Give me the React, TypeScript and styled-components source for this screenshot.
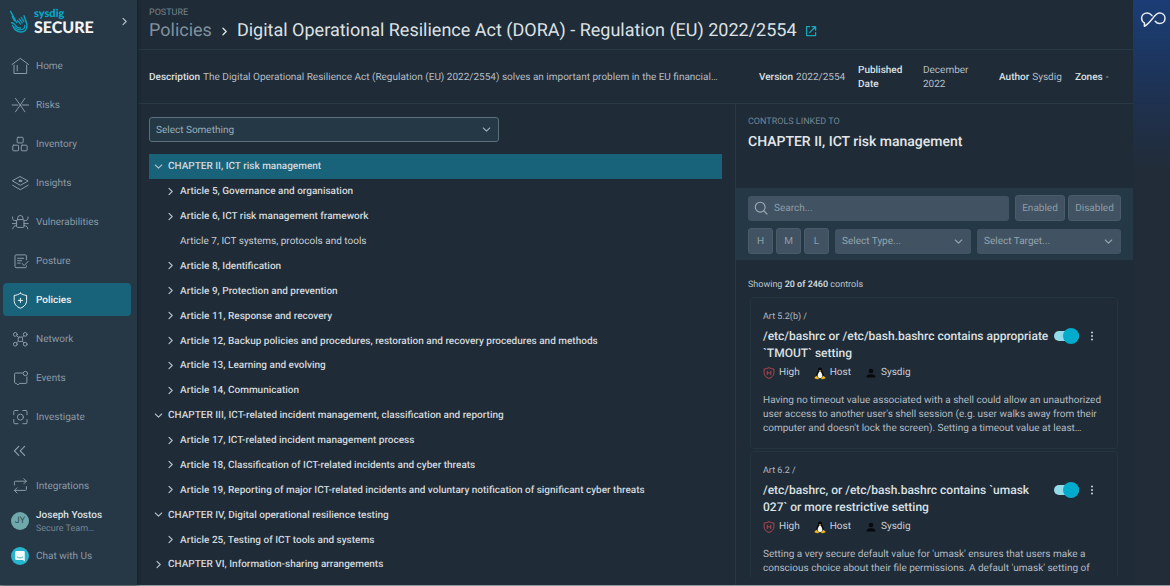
import React from "react";
import styled, { createGlobalStyle, css } from "styled-components";

const c = {
  bg: "#1f2b37",
  side: "#263746",
  accent: "#18637a",
  bar: "#253845",
  field: "#415362",
  line: "#283844",
  cardLine: "#24353f",
  text: "#c9d0d5",
  strong: "#dce1e4",
  muted: "#8b9ba6",
  dim: "#748591",
  teal: "#00abcb",
};

const Global = createGlobalStyle`
  * { box-sizing: border-box; }
  body { margin: 0; background: ${c.bg}; color: ${c.text}; font: 400 10px/14px Roboto, sans-serif; text-rendering: geometricPrecision; }
  button, input, select { font: inherit; color: inherit; margin: 0; text-rendering: inherit; }
  button { padding: 0; border: 0; background: none; cursor: pointer; text-align: left; }
  ul, h1, h2, h3, p, dl, dd { margin: 0; padding: 0; list-style: none; }
  a { color: inherit; text-decoration: none; }
  svg { display: block; flex: none; }
`;

/* ---------- page frame ---------- */

const Page = styled.div`
  display: grid;
  grid-template-columns: 137px minmax(0, 1fr) 37px;
  height: 100vh;
  border-bottom: 1px solid #8d999f;
`;

const Sidebar = styled.aside`
  display: flex;
  flex-direction: column;
  background: ${c.side};
  box-shadow: 1px 0 3px #17212b;
  z-index: 1;
`;

const Main = styled.main`
  display: flex;
  flex-direction: column;
  min-width: 0;
  min-height: 0;
`;

const Rail = styled.aside`
  background: linear-gradient(#1b3d75 0, #1b3a6b 30px, #1e3150 100px, #222c38 170px);
`;

const RailButton = styled.button`
  display: flex;
  justify-content: center;
  width: 100%;
  padding: 11px 0 0 3px;
`;

/* Row captions sit slightly below the centre line of their icon. */
const Label = styled.span`
  padding-top: 2px;
`;

/* ---------- sidebar ---------- */

const Brand = styled.a`
  display: flex;
  align-items: flex-start;
  height: 49px;
  padding: 8px 8px 0 9px;
`;

const BrandName = styled.span`
  flex: 1;
  padding-left: 5px;
  font-family: Lato, sans-serif;
  font-weight: 900;
`;

const BrandTop = styled.span`
  display: block;
  color: #08a9c8;
  font-size: 11px;
  line-height: 11px;
`;

const BrandBottom = styled.span`
  display: block;
  color: #f3f5f6;
  font-size: 16px;
  line-height: 18px;
`;

const BrandArrow = styled.span`
  padding-top: 9px;
  color: #b5c0c7;
`;

const NavList = styled.ul`
  display: flex;
  flex-direction: column;
  gap: 6px;
  padding: 0 6px 0 3px;
`;

const NavItem = styled.a<{ $active?: boolean }>`
  display: flex;
  align-items: center;
  gap: 7px;
  height: 33px;
  padding-left: 8px;
  border-radius: 4px;
  color: ${(p) => (p.$active ? "#f0f4f5" : c.muted)};
  font-weight: ${(p) => (p.$active ? 500 : 400)};
  background: ${(p) => (p.$active ? c.accent : "transparent")};
`;

const FootList = styled.div`
  display: flex;
  flex-direction: column;
  padding: 0 6px 0 3px;
`;

const footRow = css`
  display: flex;
  align-items: center;
  gap: 7px;
  height: 35px;
  padding-left: 8px;
  color: ${c.muted};
`;

const FootLink = styled.a`${footRow}`;
const FootButton = styled.button`${footRow}`;

const Avatar = styled.span<{ $fill: string }>`
  display: grid;
  place-items: center;
  width: 18px;
  height: 18px;
  border-radius: 50%;
  background: ${(p) => p.$fill};
  color: #2c4a54;
  font-size: 9px;
`;

const UserName = styled.span`
  display: block;
  color: ${c.strong};
  font-weight: 500;
`;

const UserTeam = styled.span`
  display: block;
  color: ${c.dim};
  font-size: 9px;
  line-height: 12px;
`;

/* ---------- header ---------- */

const Header = styled.header`
  height: 50px;
  padding: 7px 12px 0;
  border-bottom: 1px solid ${c.line};
`;

const Overline = styled.p`
  color: ${c.dim};
  font-size: 9px;
  line-height: 12px;
`;

const Crumbs = styled.div`
  display: flex;
  align-items: center;
  gap: 8px;
  color: ${c.strong};
  font-size: 18px;
  line-height: 24px;
`;

const CrumbLink = styled.a`
  color: #7f919d;
`;

const Title = styled.h1`
  font-size: 18px;
  font-weight: 400;
  line-height: 24px;
`;

const Meta = styled.dl`
  display: flex;
  align-items: center;
  height: 54px;
  padding: 2px 23px 0 12px;
  border-bottom: 1px solid ${c.line};
`;

const MetaItem = styled.div<{ $w?: number }>`
  display: flex;
  align-items: center;
  gap: 3px;
  flex: ${(p) => (p.$w ? `0 0 ${p.$w}px` : "1 1 0")};
  min-width: 0;
  white-space: nowrap;
`;

const Term = styled.dt<{ $w?: number }>`
  color: ${c.strong};
  font-weight: 500;
  width: ${(p) => (p.$w ? `${p.$w}px` : "auto")};
  white-space: ${(p) => (p.$w ? "normal" : "nowrap")};
`;

const Value = styled.dd<{ $w?: number }>`
  color: #b5bec5;
  width: ${(p) => (p.$w ? `${p.$w}px` : "auto")};
  white-space: ${(p) => (p.$w ? "normal" : "nowrap")};
`;

/* ---------- requirement tree ---------- */

const Columns = styled.div`
  display: flex;
  flex: 1;
  min-height: 0;
`;

const TreePanel = styled.section`
  display: flex;
  flex: 1;
  flex-direction: column;
  min-width: 0;
  padding: 13px 13px 8px 12px;
`;

const Picker = styled.span<{ $w?: number; $outlined?: boolean }>`
  display: grid;
  align-items: center;
  flex: ${(p) => (p.$w ? "0 0 auto" : "1 1 0")};
  width: ${(p) => (p.$w ? `${p.$w}px` : "auto")};
  color: ${(p) => (p.$outlined ? "#9badb8" : "#95a4ae")};

  & > * { grid-area: 1 / 1; }
  & > svg { justify-self: end; margin-right: 8px; pointer-events: none; }
  & > select {
    appearance: none;
    width: 100%;
    height: 25px;
    padding: 2px 24px 0 ${(p) => (p.$outlined ? 6 : 7)}px;
    border: ${(p) => (p.$outlined ? "1px solid #5c6f7c" : "0")};
    border-radius: 3px;
    background: ${(p) => (p.$outlined ? c.bar : c.field)};
  }
`;

const Tree = styled.ul`
  display: flex;
  flex: 1;
  flex-direction: column;
  min-height: 0;
  padding-top: 12px;
`;

const TreeItem = styled.li`
  display: flex;
  flex: 1 1 0;
  min-height: 24px;
  max-height: 25px;
`;

const TreeRow = styled.button<{ $level: number; $selected?: boolean; $plain?: boolean }>`
  display: flex;
  align-items: center;
  flex: 1;
  gap: 4px;
  padding-left: ${(p) => (p.$level === 2 ? 16 : 4)}px;
  background: ${(p) => (p.$selected ? c.accent : "transparent")};
  color: ${(p) => (p.$plain ? c.text : "#d3d9dd")};
  font-weight: ${(p) => (p.$plain ? 400 : 500)};
  white-space: nowrap;
`;

const ChevronSlot = styled.span`
  display: grid;
  place-items: center;
  width: 11px;
  color: #b3bdc5;
`;

/* ---------- controls ---------- */

const ControlsPanel = styled.section`
  display: flex;
  flex-direction: column;
  flex: 0 0 398px;
  min-height: 0;
  padding-bottom: 8px;
  border-left: 1px solid ${c.line};
`;

const ControlsHead = styled.div`
  height: 84px;
  padding: 12px 12px 0;
`;

const ControlsTitle = styled.h2`
  padding-top: 5px;
  color: #e3e7e9;
  font-size: 14px;
  font-weight: 500;
  line-height: 18px;
`;

const Filters = styled.div`
  display: flex;
  flex-direction: column;
  gap: 7px;
  padding: 7px 12px 6px;
  background: ${c.bar};
`;

const FilterRow = styled.div`
  display: flex;
  align-items: center;
  gap: 6px;
`;

const ButtonGroup = styled.div`
  display: flex;
  gap: 3px;
`;

const FilterButton = styled.button<{ $w: number }>`
  width: ${(p) => p.$w}px;
  height: 26px;
  padding-top: 2px;
  border: 1px solid #4a5b69;
  border-radius: 3px;
  background: ${c.field};
  color: #8d9da8;
  text-align: center;
`;

const Search = styled.label`
  display: flex;
  align-items: center;
  flex: 1;
  gap: 6px;
  height: 25px;
  padding: 0 6px;
  border-radius: 3px;
  background: ${c.field};
  color: #a0adb6;
`;

const SearchInput = styled.input`
  flex: 1;
  min-width: 0;
  padding: 2px 0 0;
  border: 0;
  outline: 0;
  background: none;
  &::placeholder { color: #8d9da8; opacity: 1; }
`;

const Count = styled.p`
  padding: 18px 12px 5px;
  color: #bcc5cb;
  font-size: 9px;
  & > strong { color: ${c.strong}; font-weight: 500; }
`;

const CardList = styled.ul`
  display: flex;
  flex-direction: column;
  flex: 1;
  gap: 2px;
  min-height: 0;
  overflow: hidden;
  padding: 0 15px 0 14px;
`;

const Card = styled.li`
  flex: none;
  padding: 12px 12px 12px;
  border: 1px solid ${c.cardLine};
  border-radius: 4px;
`;

const CardRef = styled.p`
  color: #b0bac1;
  font-size: 9px;
`;

const CardTop = styled.div`
  display: flex;
  align-items: flex-start;
  padding-top: 4px;
`;

const CardTitle = styled.h3`
  flex: 1;
  color: ${c.strong};
  font-size: 12px;
  font-weight: 500;
  line-height: 17px;
`;

const Toggle = styled.input`
  appearance: none;
  display: grid;
  align-items: center;
  flex: none;
  width: 25px;
  height: 16px;
  margin: 0 9px 0 0;
  cursor: pointer;

  &::before,
  &::after {
    content: "";
    grid-area: 1 / 1;
  }

  &::before {
    height: 10px;
    border-radius: 5px;
    background: #93dbe8;
  }

  &::after {
    justify-self: end;
    width: 16px;
    height: 16px;
    border-radius: 50%;
    background: ${c.teal};
  }
`;

const Kebab = styled.button`
  display: grid;
  place-items: center;
  width: 8px;
  height: 16px;
  margin-right: 9px;
  color: #cfd6da;
`;

const Tags = styled.ul`
  display: flex;
  gap: 14px;
  padding-top: 4px;
`;

const Tag = styled.li`
  display: flex;
  align-items: center;
  gap: 4px;
  height: 14px;
  color: ${c.text};
`;

const CardText = styled.p`
  padding-top: 14px;
  color: #b3bcc3;
`;

/* ---------- icons ---------- */

const Svg = ({ size = 18, children, w = 1 }: { size?: number; children: React.ReactNode; w?: number }) => (
  <svg width={size} height={size} viewBox={`0 0 ${size} ${size}`} fill="none" stroke="currentColor" strokeWidth={w} strokeLinecap="round" strokeLinejoin="round" aria-hidden="true">
    {children}
  </svg>
);

const ChevronDown = () => <Svg size={9} w={1.1}><path d="M1.3 3 4.5 6.2 7.7 3" /></Svg>;
const ChevronRight = ({ w = 1.2 }: { w?: number }) => <Svg size={9} w={w}><path d="M3 1.3 6.2 4.5 3 7.7" /></Svg>;

const icons: Record<string, React.ReactNode> = {
  home: <><path d="M1 7.5 9.3 1.4l8.3 6.1" /><path d="M3 8v8.5h12.7V8M6.2 8.5V14" /></>,
  risks: <path d="M1.2 9h5.6M11 9h6.6M4.5 2.4 9.2 9l4.7-6.6M4.5 15.8 9.2 9l4.7 6.8" />,
  inventory: <><rect x="6.2" y="2.3" width="6" height="5.6" rx=".8" /><rect x="1.8" y="10.2" width="5.8" height="5.6" rx=".8" /><rect x="10.3" y="10.2" width="5.8" height="5.6" rx=".8" /></>,
  insights: <><path d="M9.3 2.7 17.2 7l-7.9 4.3L1.6 7z" /><path d="M1.6 11.2l7.7 4.5 7.9-4.5" /><ellipse cx="9.3" cy="6.9" rx="1.6" ry=".8" fill="currentColor" /></>,
  vulnerabilities: <><rect x="5.6" y="6.6" width="7.4" height="7.8" rx="1" /><path d="M6.6 6.4V5.2a2.7 2.7 0 0 1 5.4 0v1.2M1.6 4v1.6c0 1.2 1 1.8 4 2.2M17 4v1.6c0 1.2-1 1.8-4 2.2M1.4 10.6h4.2M13 10.6h4.2M5.6 12.6c-2.6.3-3.6 1-3.8 3.2M13 12.6c2.6.3 3.6 1 3.8 3.2" /></>,
  posture: <><path d="M15.4 7.8V3.9a1 1 0 0 0-1-1H5a1 1 0 0 0-1 1v10.8a1 1 0 0 0 1 1h9.4a1 1 0 0 0 1-1v-.9" /><path d="M6.6 6.3h6M6.6 8.7h4M6.6 11.1h2.6M11 11.4l2.2 2.1 4-4.2" /></>,
  policies: <><path d="M9.4 2.2c1.8 1.3 3.8 2 6.2 2.2v5c0 3.8-2.4 6.4-6.2 7.8-3.8-1.4-6.2-4-6.2-7.8v-5c2.4-.2 4.4-.9 6.2-2.2z" /><path d="M9.4 7.3v4.2M7.3 9.4h4.2" /></>,
  network: <><rect x="7.2" y="7.1" width="4.4" height="4.4" rx="1" /><circle cx="4.3" cy="4.4" r="1.9" /><circle cx="14.2" cy="4.4" r="1.9" /><circle cx="4.3" cy="14.2" r="1.9" /><circle cx="14.2" cy="14.2" r="1.9" /><path d="m5.7 5.8 1.7 1.6M12.8 5.8l-1.5 1.6M5.7 12.8l1.7-1.6M12.8 12.8l-1.5-1.6" /></>,
  events: <><path d="M11.3 4H4.6a1 1 0 0 0-1 1v8.4a1 1 0 0 0 1 1h.8l1.5 1.6 1.5-1.6h6.5a1 1 0 0 0 1-1V8" /><circle cx="14.4" cy="4.5" r="2.2" /></>,
  investigate: <><circle cx="9.4" cy="9.1" r="3" /><path d="M2.8 6.7V3.5a1 1 0 0 1 1-1H7M11.8 2.5H15a1 1 0 0 1 1 1v3.2M16 11.5v3.2a1 1 0 0 1-1 1h-3.2M7 15.7H3.8a1 1 0 0 1-1-1v-3.2" /></>,
  collapse: <path d="m7.8 4.4-4.4 4.5 4.4 4.5M13.6 4.4 9.2 8.9l4.4 4.5" strokeWidth="1.3" />,
  integrations: <><path d="M3.4 8V5.2a1 1 0 0 1 1-1h10.8M12.8 1.6l2.6 2.6-2.6 2.6" /><path d="M15.4 9.6v2.8a1 1 0 0 1-1 1H3.6M6 10.8l-2.6 2.6L6 16" /></>,
};

const Logo = () => (
  <svg width="20" height="26" viewBox="0 0 20 26" fill="none" stroke="#0ba5c4" strokeWidth="1.4" strokeLinecap="round" strokeLinejoin="round" aria-hidden="true">
    <path d="M1.6 3.4 5 9.8c.8 1.6 1.2 3 2.8 4.8" />
    <path d="M3.4 8.6 5.4 12.8M2.6 14.8c1.6-.2 2.6.6 3.6 2.2 1.2 2 3 3.2 5.2 3" />
    <path d="M3.6 17.4c1.6 4 4.4 6.6 8.4 6.6 3.8 0 6-2.8 6-6.2 0-3.6-1.8-5.8-3-10" />
    <path d="M5.6 19c1.6 2 3.6 3 6 2.8 2.6-.2 4.2-2 4.2-4.4M8.4 12.4l3.2 3.8M10.2 10.8l3.2 4M12.2 9.4l2.8 4.2" strokeWidth="1.1" />
  </svg>
);

const InfinityMark = () => (
  <svg width="27" height="17" viewBox="0 0 27 17" fill="none" stroke="#e6ebf2" strokeWidth="1.5" strokeLinecap="round" strokeLinejoin="round" aria-hidden="true">
    <path d="M12 4.6C10.6 2.8 9 1.9 7.2 1.9c-3.3 0-5.6 2.4-5.6 5.4 0 2.2 1 3.6 2.8 4.5v3.4c2.8-1.3 5.4-4.3 8-7.5 2.2-2.8 4-5.8 7.2-5.8 3.2 0 5.4 2.4 5.4 5.3 0 3-2.2 5.4-5.4 5.4-2 0-3.3-.9-4.4-2.3" />
  </svg>
);

const ExternalIcon = () => (
  <svg width="12" height="12" viewBox="0 0 12 12" fill="none" stroke="#18a5b9" strokeWidth="1.3" strokeLinecap="round" strokeLinejoin="round" aria-hidden="true">
    <path d="M4.6 1.6h-3v9h9v-3M7 1.6h3.6v3.6M10.4 1.8 4.6 7.6" />
  </svg>
);

const SearchIcon = () => <Svg size={14} w={1.1}><circle cx="6.2" cy="6.2" r="4.9" /><path d="m9.8 9.8 3.2 3.2" /></Svg>;

const KebabIcon = () => (
  <svg width="4" height="10" viewBox="0 0 4 10" fill="currentColor" aria-hidden="true">
    <circle cx="2" cy="1.4" r="1" /><circle cx="2" cy="5" r="1" /><circle cx="2" cy="8.6" r="1" />
  </svg>
);

const HighIcon = () => (
  <svg width="12" height="12" viewBox="0 0 12 12" fill="none" stroke="#b0464d" strokeWidth="1" strokeLinejoin="round" aria-hidden="true">
    <path d="M6 .7c1.5.8 3.1 1.2 4.9 1.3v3.8c0 2.7-1.9 4.6-4.9 5.7C3 10.4 1.1 8.5 1.1 5.8V2C2.9 1.9 4.5 1.5 6 .7z" />
    <path d="M4.2 3.7v4.4M7.8 3.7v4.4M4.2 5.9h3.6" />
  </svg>
);

const TuxIcon = () => (
  <svg width="12" height="13" viewBox="0 0 12 13" aria-hidden="true">
    <path d="M6 .5c-1.5 0-2 1-1.9 2.6C4 4.7 2.5 6 2.2 8.3L3 11h6l.8-2.7C9.5 6 8 4.7 7.9 3.1 8 1.5 7.5.5 6 .5z" fill="#080808" />
    <path d="M6 4c-1 .6-2.4 3-2.4 5 0 1.3 1 2.2 2.4 2.2S8.4 10.3 8.4 9C8.4 7 7 4.6 6 4z" fill="#f6f6f6" />
    <path d="M5 3.1h2L6 4.2z" fill="#f2b70a" />
    <path d="M2.4 8.7 4.6 11c.4.7 0 1.4-1 1.3L.9 11.6c-.5-.2-.5-.6-.2-1zM9.6 8.7 7.4 11c-.4.7 0 1.4 1 1.3l2.7-.7c.5-.2.5-.6.2-1z" fill="#f2b70a" />
  </svg>
);

const PersonIcon = () => (
  <svg width="12" height="12" viewBox="0 0 12 12" fill="#070a0d" aria-hidden="true">
    <circle cx="6" cy="4" r="2.3" /><path d="M1.6 10.4V9.6C1.6 7.9 4.4 7.2 6 7.2s4.4.7 4.4 2.4v.8z" />
  </svg>
);

const ChatIcon = () => (
  <svg width="12" height="12" viewBox="0 0 12 12" aria-hidden="true">
    <path d="M2.4 1h7.2a1.2 1.2 0 0 1 1.2 1.2V11.4L8.9 10H2.4A1.2 1.2 0 0 1 1.2 8.8V2.2A1.2 1.2 0 0 1 2.4 1z" fill="#f3fafb" />
    <path d="M3.2 7c1.7 1.3 3.9 1.3 5.6 0" fill="none" stroke="#27b4cd" strokeWidth=".9" strokeLinecap="round" />
  </svg>
);

/* ---------- data ---------- */

const nav = ["Home", "Risks", "Inventory", "Insights", "Vulnerabilities", "Posture", "Policies", "Network", "Events", "Investigate"];

type Node = { text: string; level: 1 | 2; state: "open" | "closed" | "leaf" };

const tree: Node[] = [
  { text: "CHAPTER II, ICT risk management", level: 1, state: "open" },
  { text: "Article 5, Governance and organisation", level: 2, state: "closed" },
  { text: "Article 6, ICT risk management framework", level: 2, state: "closed" },
  { text: "Article 7, ICT systems, protocols and tools", level: 2, state: "leaf" },
  { text: "Article 8, Identification", level: 2, state: "closed" },
  { text: "Article 9, Protection and prevention", level: 2, state: "closed" },
  { text: "Article 11, Response and recovery", level: 2, state: "closed" },
  { text: "Article 12, Backup policies and procedures, restoration and recovery procedures and methods", level: 2, state: "closed" },
  { text: "Article 13, Learning and evolving", level: 2, state: "closed" },
  { text: "Article 14, Communication", level: 2, state: "closed" },
  { text: "CHAPTER III, ICT-related incident management, classification and reporting", level: 1, state: "open" },
  { text: "Article 17, ICT-related incident management process", level: 2, state: "closed" },
  { text: "Article 18, Classification of ICT-related incidents and cyber threats", level: 2, state: "closed" },
  { text: "Article 19, Reporting of major ICT-related incidents and voluntary notification of significant cyber threats", level: 2, state: "closed" },
  { text: "CHAPTER IV, Digital operational resilience testing", level: 1, state: "open" },
  { text: "Article 25, Testing of ICT tools and systems", level: 2, state: "closed" },
  { text: "CHAPTER VI, Information-sharing arrangements", level: 1, state: "closed" },
];

const controls = [
  {
    ref: "Art 5.2(b) /",
    title: "/etc/bashrc or /etc/bash.bashrc contains appropriate `TMOUT` setting",
    text: "Having no timeout value associated with a shell could allow an unauthorized user access to another user's shell session (e.g. user walks away from their computer and doesn't lock the screen). Setting a timeout value at least…",
  },
  {
    ref: "Art 6.2 /",
    title: "/etc/bashrc, or /etc/bash.bashrc contains `umask 027` or more restrictive setting",
    text: "Setting a very secure default value for 'umask' ensures that users make a conscious choice about their file permissions. A default 'umask' setting of",
  },
];

export default function App() {
  return (
    <>
      <Global />
      <Page>
        <Sidebar>
          <Brand href="#">
            <Logo />
            <BrandName>
              <BrandTop>sysdig</BrandTop>
              <BrandBottom>SECURE</BrandBottom>
            </BrandName>
            <BrandArrow><ChevronRight /></BrandArrow>
          </Brand>
          <nav>
            <NavList>
              {nav.map((name) => (
                <li key={name}>
                  <NavItem href="#" $active={name === "Policies"}>
                    <Svg>{icons[name.toLowerCase()]}</Svg>
                    <Label>{name}</Label>
                  </NavItem>
                </li>
              ))}
            </NavList>
          </nav>
          <FootList>
            <FootButton type="button" aria-label="Collapse menu"><Svg>{icons.collapse}</Svg></FootButton>
            <FootLink href="#"><Svg>{icons.integrations}</Svg><Label>Integrations</Label></FootLink>
            <FootButton type="button">
              <Avatar $fill="#6fa9ac">JY</Avatar>
              <Label>
                <UserName>Joseph Yostos</UserName>
                <UserTeam>Secure Team…</UserTeam>
              </Label>
            </FootButton>
            <FootButton type="button"><Avatar $fill="#27b4cd"><ChatIcon /></Avatar><Label>Chat with Us</Label></FootButton>
          </FootList>
        </Sidebar>

        <Main>
          <Header>
            <Overline>POSTURE</Overline>
            <Crumbs>
              <CrumbLink href="#">Policies</CrumbLink>
              <ChevronRight w={1.4} />
              <Title>Digital Operational Resilience Act (DORA) - Regulation (EU) 2022/2554</Title>
              <a href="#" aria-label="Open regulation"><ExternalIcon /></a>
            </Crumbs>
          </Header>
          <Meta>
            <MetaItem>
              <Term>Description</Term>
              <Value>The Digital Operational Resilience Act (Regulation (EU) 2022/2554) solves an important problem in the EU financial…</Value>
            </MetaItem>
            <MetaItem $w={99}><Term>Version</Term><Value>2022/2554</Value></MetaItem>
            <MetaItem $w={141}><Term $w={62}>Published Date</Term><Value $w={60}>December 2022</Value></MetaItem>
            <MetaItem $w={76}><Term>Author</Term><Value>Sysdig</Value></MetaItem>
            <MetaItem $w={35}><Term>Zones</Term><Value>-</Value></MetaItem>
          </Meta>
          <Columns>
            <TreePanel>
              <Picker $w={350} $outlined>
                <select aria-label="Requirement filter"><option>Select Something</option></select>
                <ChevronDown />
              </Picker>
              <Tree role="tree">
                {tree.map((n, i) => (
                  <TreeItem key={n.text} role="treeitem" aria-level={n.level} aria-selected={i === 0} aria-expanded={n.state === "leaf" ? undefined : n.state === "open"}>
                    <TreeRow type="button" $level={n.level} $selected={i === 0} $plain={n.state === "leaf"}>
                      <ChevronSlot>
                        {n.state === "open" && <ChevronDown />}
                        {n.state === "closed" && <ChevronRight />}
                      </ChevronSlot>
                      <Label>{n.text}</Label>
                    </TreeRow>
                  </TreeItem>
                ))}
              </Tree>
            </TreePanel>

            <ControlsPanel>
              <ControlsHead>
                <Overline>CONTROLS LINKED TO</Overline>
                <ControlsTitle>CHAPTER II, ICT risk management</ControlsTitle>
              </ControlsHead>
              <Filters>
                <FilterRow>
                  <Search>
                    <SearchIcon />
                    <SearchInput type="text" placeholder="Search..." aria-label="Search controls" />
                  </Search>
                  <ButtonGroup>
                    <FilterButton type="button" $w={50}>Enabled</FilterButton>
                    <FilterButton type="button" $w={53}>Disabled</FilterButton>
                  </ButtonGroup>
                </FilterRow>
                <FilterRow>
                  <ButtonGroup>
                    {["H", "M", "L"].map((s) => <FilterButton key={s} type="button" $w={25}>{s}</FilterButton>)}
                  </ButtonGroup>
                  <Picker $w={136}>
                    <select aria-label="Type"><option>Select Type...</option></select>
                    <ChevronDown />
                  </Picker>
                  <Picker>
                    <select aria-label="Target"><option>Select Target...</option></select>
                    <ChevronDown />
                  </Picker>
                </FilterRow>
              </Filters>
              <Count>Showing <strong>20 of 2460</strong> controls</Count>
              <CardList>
                {controls.map((k) => (
                  <Card key={k.ref}>
                    <CardRef>{k.ref}</CardRef>
                    <CardTop>
                      <CardTitle>{k.title}</CardTitle>
                      <Toggle type="checkbox" role="switch" defaultChecked aria-label={`Enable ${k.title}`} />
                      <Kebab type="button" aria-label="More actions"><KebabIcon /></Kebab>
                    </CardTop>
                    <Tags>
                      <Tag><HighIcon />High</Tag>
                      <Tag><TuxIcon />Host</Tag>
                      <Tag><PersonIcon />Sysdig</Tag>
                    </Tags>
                    <CardText>{k.text}</CardText>
                  </Card>
                ))}
              </CardList>
            </ControlsPanel>
          </Columns>
        </Main>

        <Rail>
          <RailButton type="button" aria-label="Open assistant"><InfinityMark /></RailButton>
        </Rail>
      </Page>
    </>
  );
}
